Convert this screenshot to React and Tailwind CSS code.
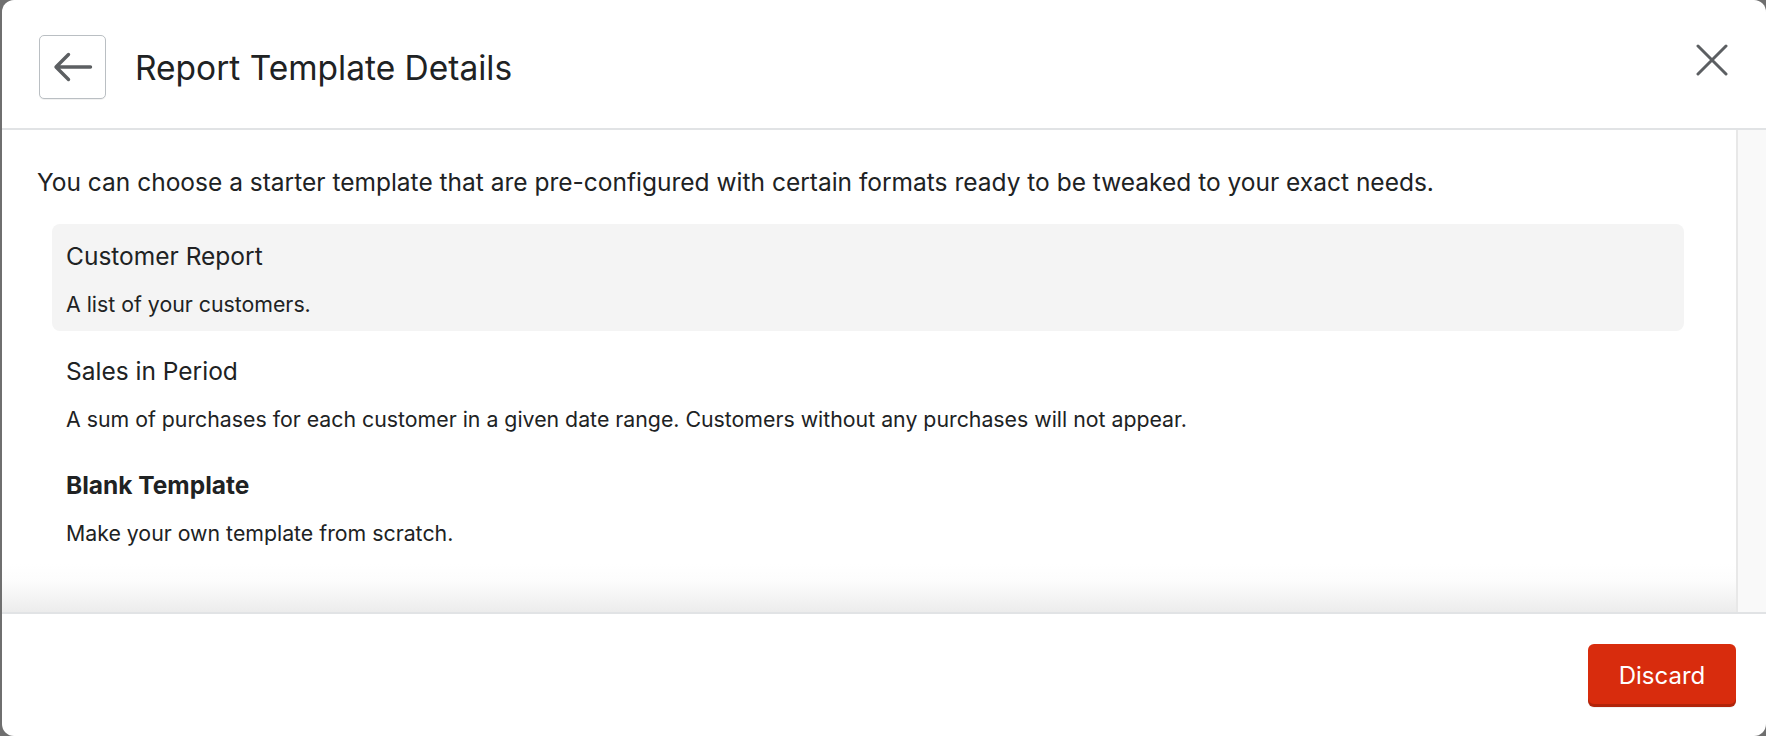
import React from "react";

function BackArrow() {
  return (
    <svg width="40" height="32" viewBox="0 0 40 32" fill="none">
      <path d="M37.5 16H3.5M15.5 3.5L3 16l12.5 12.5" stroke="#5c5f62" strokeWidth="3.4" strokeLinecap="round" strokeLinejoin="round" />
    </svg>
  );
}

function CloseX() {
  return (
    <svg width="32" height="32" viewBox="0 0 32 32" fill="none">
      <path d="M2 2L30 30M30 2L2 30" stroke="#5c5f62" strokeWidth="3" strokeLinecap="round" />
    </svg>
  );
}

const items = [
  { title: "Customer Report", desc: "A list of your customers.", active: true },
  {
    title: "Sales in Period",
    desc: "A sum of purchases for each customer in a given date range. Customers without any purchases will not appear.",
  },
  { title: "Blank Template", desc: "Make your own template from scratch.", bold: true },
];

export default function App() {
  return (
    <div className="w-[1766px] h-[736px] bg-[#6f6f6f] pl-[2px] font-['Inter',sans-serif] text-[#202223] overflow-hidden">
      <div className="h-full bg-white rounded-[12px] flex flex-col overflow-hidden">
        <div className="h-[130px] shrink-0 border-b-2 border-[#e1e3e5] flex items-start pt-[35px] pl-[37px] pr-[38px]">
          <button className="w-[67px] h-[64px] border border-[#babfc3] rounded-[5px] shadow-[0_1px_0_rgba(0,0,0,0.05)] flex items-center justify-center bg-white">
            <BackArrow />
          </button>
          <h1 className="ml-[29px] mt-[11px] text-[33.5px] leading-[44px] font-normal">Report Template Details</h1>
          <div className="ml-auto mt-[9px] flex items-center justify-center">
            <CloseX />
          </div>
        </div>
        <div className="h-[482px] shrink-0 flex">
          <div className="flex-1 pt-[36px] pl-[35px] pr-[37px] bg-[linear-gradient(to_bottom,#ffffff_calc(100%-48px),#fcfcfc_calc(100%-30px),#ececec)]">
            <p className="text-[24.5px] leading-[32px]">
              You can choose a starter template that are pre-configured with certain formats ready to be tweaked to your exact needs.
            </p>
            <div className="mt-[26px] mx-[15px] flex flex-col gap-[7.5px]">
              {items.map((it) => (
                <div
                  key={it.title}
                  className={`h-[107px] rounded-[8px] px-[14px] pt-[16px] ${it.active ? "bg-[#f4f4f4]" : ""}`}
                >
                  <div className={`text-[24.5px] leading-[32px] ${it.bold ? "font-bold" : "font-normal"}`}>{it.title}</div>
                  <div className="mt-[18px] text-[21.3px] leading-[28px]">{it.desc}</div>
                </div>
              ))}
            </div>
          </div>
          <div className="w-[30px] shrink-0 bg-[#f9f9f9] border-l-2 border-[#e8e8e8]"></div>
        </div>
        <div className="flex-1 border-t-2 border-[#e1e3e5] flex justify-end items-start pt-[30px] pr-[30px]">
          <button className="w-[148px] h-[63px] rounded-[6px] bg-[#d82c0d] text-white text-[24px] leading-none shadow-[inset_0_-3px_0_rgba(0,0,0,0.18),0_1px_0_rgba(0,0,0,0.05)] flex items-center justify-center">
            Discard
          </button>
        </div>
      </div>
    </div>
  );
}
